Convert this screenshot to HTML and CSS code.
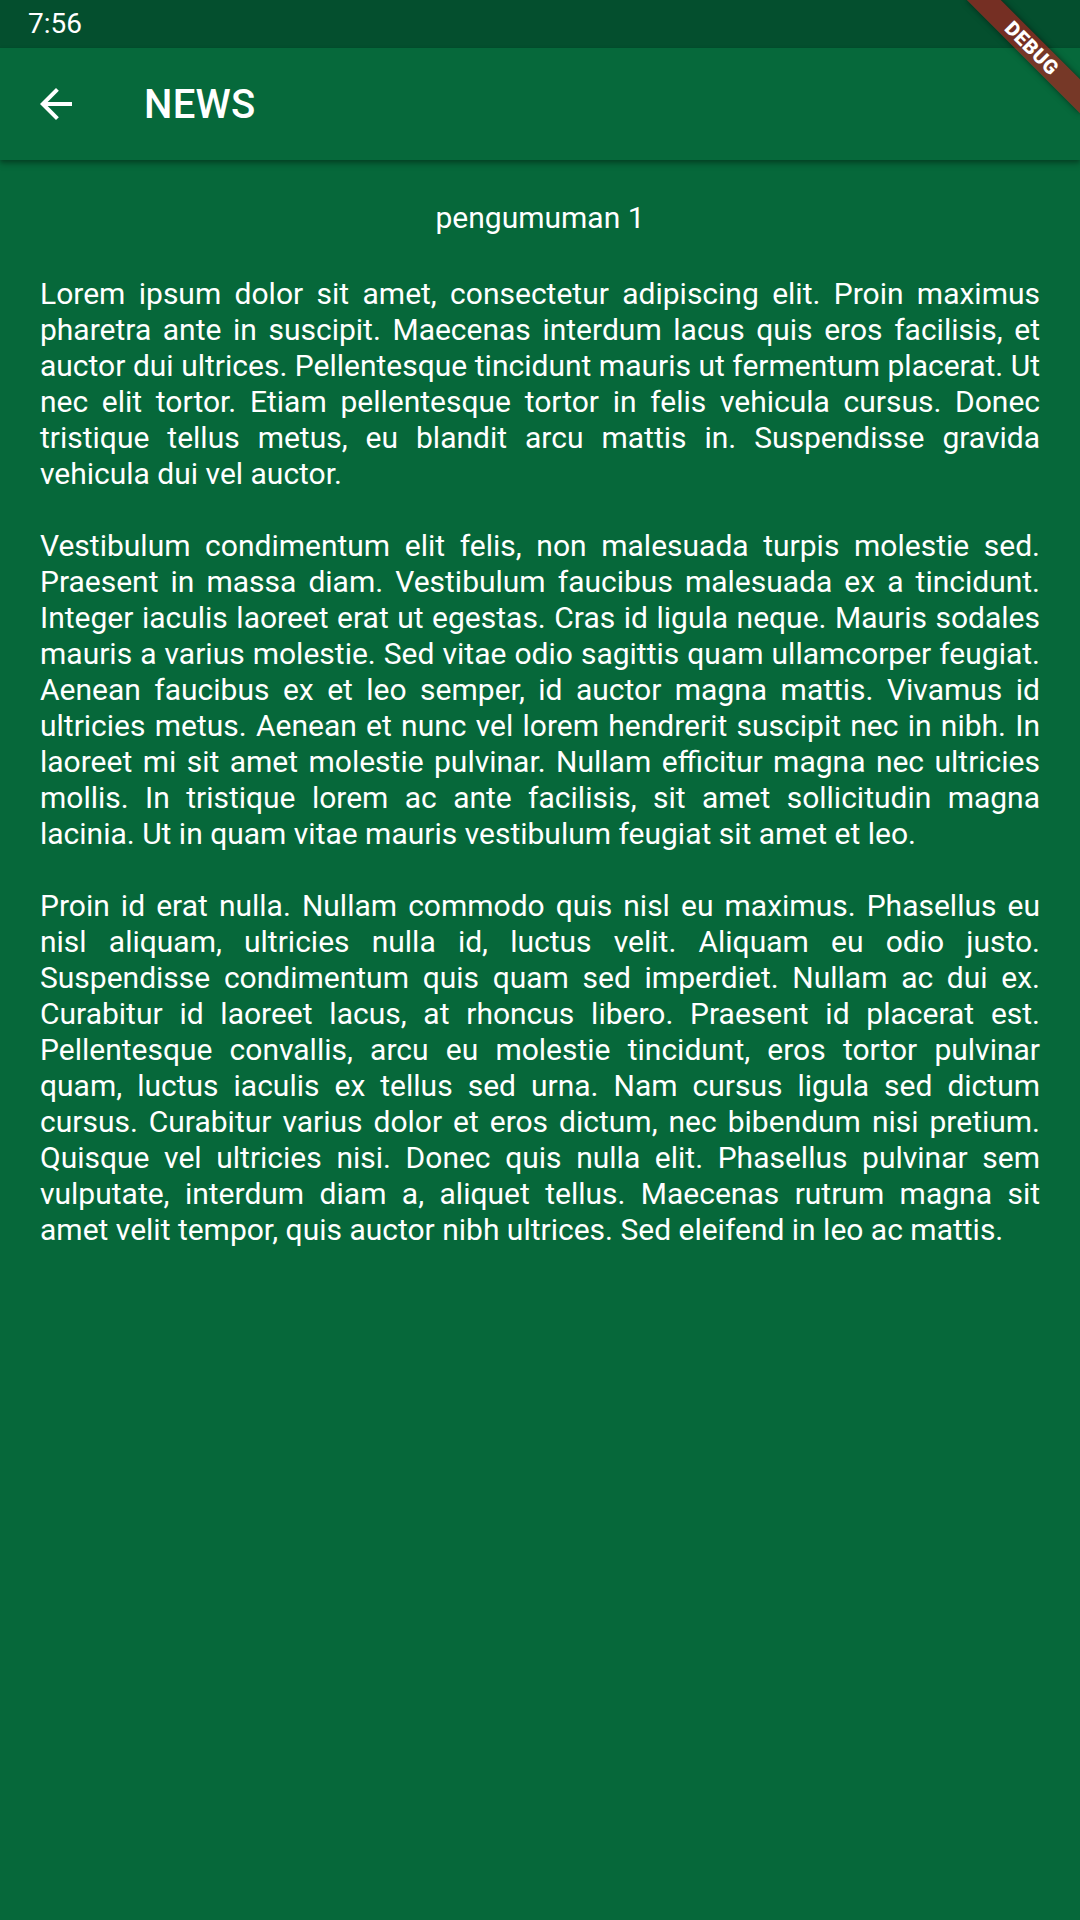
FILE: index.html
```html
<!DOCTYPE html>
<html>
<head>
<meta charset="utf-8">
<link rel="stylesheet" href="styles.css">
</head>
<body>
<div class="screen">
  <div class="status-bar">
    <span class="time">7:56</span>
  </div>
  <header class="app-bar">
    <div class="leading">
      <svg class="back-icon" viewBox="0 0 24 24" width="48" height="48">
        <path d="M20 11H7.83l5.59-5.59L12 4l-8 8 8 8 1.41-1.41L7.83 13H20v-2z" fill="#ffffff"/>
      </svg>
    </div>
    <h1 class="title">NEWS</h1>
  </header>
  <main class="content">
    <h2 class="news-title">pengumuman 1</h2>
    <p class="para">Lorem ipsum dolor sit amet, consectetur adipiscing elit. Proin maximus pharetra ante in suscipit. Maecenas interdum lacus quis eros facilisis, et auctor dui ultrices. Pellentesque tincidunt mauris ut fermentum placerat. Ut nec elit tortor. Etiam pellentesque tortor in felis vehicula cursus. Donec tristique tellus metus, eu blandit arcu mattis in. Suspendisse gravida vehicula dui vel auctor.</p>
    <p class="para">Vestibulum condimentum elit felis, non malesuada turpis molestie sed. Praesent in massa diam. Vestibulum faucibus malesuada ex a tincidunt. Integer iaculis laoreet erat ut egestas. Cras id ligula neque. Mauris sodales mauris a varius molestie. Sed vitae odio sagittis quam ullamcorper feugiat. Aenean faucibus ex et leo semper, id auctor magna mattis. Vivamus id ultricies metus. Aenean et nunc vel lorem hendrerit suscipit nec in nibh. In laoreet mi sit amet molestie pulvinar. Nullam efficitur magna nec ultricies mollis. In tristique lorem ac ante facilisis, sit amet sollicitudin magna lacinia. Ut in quam vitae mauris vestibulum feugiat sit amet et leo.</p>
    <p class="para">Proin id erat nulla. Nullam commodo quis nisl eu maximus. Phasellus eu nisl aliquam, ultricies nulla id, luctus velit. Aliquam eu odio justo. Suspendisse condimentum quis quam sed imperdiet. Nullam ac dui ex. Curabitur id laoreet lacus, at rhoncus libero. Praesent id placerat est. Pellentesque convallis, arcu eu molestie tincidunt, eros tortor pulvinar quam, luctus iaculis ex tellus sed urna. Nam cursus ligula sed dictum cursus. Curabitur varius dolor et eros dictum, nec bibendum nisi pretium. Quisque vel ultricies nisi. Donec quis nulla elit. Phasellus pulvinar sem vulputate, interdum diam a, aliquet tellus. Maecenas rutrum magna sit amet velit tempor, quis auctor nibh ultrices. Sed eleifend in leo ac mattis.</p>
  </main>
  <div class="debug-banner">
    <div class="ribbon">DEBUG</div>
  </div>
</div>
</body>
</html>
```
FILE: styles.css
```css
html, body {
  margin: 0;
  padding: 0;
}
body {
  font-family: Roboto, "Noto Sans", sans-serif;
  background: #06683a;
  color: #ffffff;
}
.screen {
  position: relative;
  width: 1080px;
  height: 1920px;
  overflow: hidden;
  background: #06683a;
  display: flex;
  flex-direction: column;
}
.status-bar {
  height: 48px;
  background: #044f2e;
  display: flex;
  align-items: center;
  padding-left: 28px;
  flex-shrink: 0;
}
.time {
  font-size: 28px;
  line-height: 1;
  color: #ffffff;
}
.app-bar {
  height: 112px;
  background: #06693b;
  display: flex;
  align-items: center;
  box-shadow: 0 4px 6px rgba(0, 0, 0, 0.25), 0 2px 3px rgba(0, 0, 0, 0.15);
  position: relative;
  z-index: 1;
  flex-shrink: 0;
}
.leading {
  width: 112px;
  height: 112px;
  display: flex;
  align-items: center;
  justify-content: center;
  margin-right: 32px;
}
.back-icon {
  display: block;
}
.title {
  margin: 0;
  font-size: 40px;
  font-weight: 500;
  letter-spacing: 0.3px;
}
.content {
  padding: 40px 40px 0 40px;
}
.news-title {
  margin: 0 0 40px 0;
  text-align: center;
  font-size: 30px;
  font-weight: 400;
  line-height: 36px;
}
.para {
  margin: 0 0 36px 0;
  font-size: 30px;
  line-height: 36px;
  text-align: justify;
}
.debug-banner {
  position: absolute;
  top: 0;
  right: 0;
  width: 0;
  height: 0;
  transform: rotate(45deg);
  z-index: 5;
}
.ribbon {
  position: absolute;
  left: -80px;
  top: 56px;
  width: 160px;
  height: 24px;
  background: rgba(183, 28, 28, 0.63);
  box-shadow: 0 0 6px rgba(0, 0, 0, 0.5);
  color: #ffffff;
  font-size: 20px;
  font-weight: 900;
  line-height: 24px;
  text-align: center;
  letter-spacing: 0.5px;
}
```
